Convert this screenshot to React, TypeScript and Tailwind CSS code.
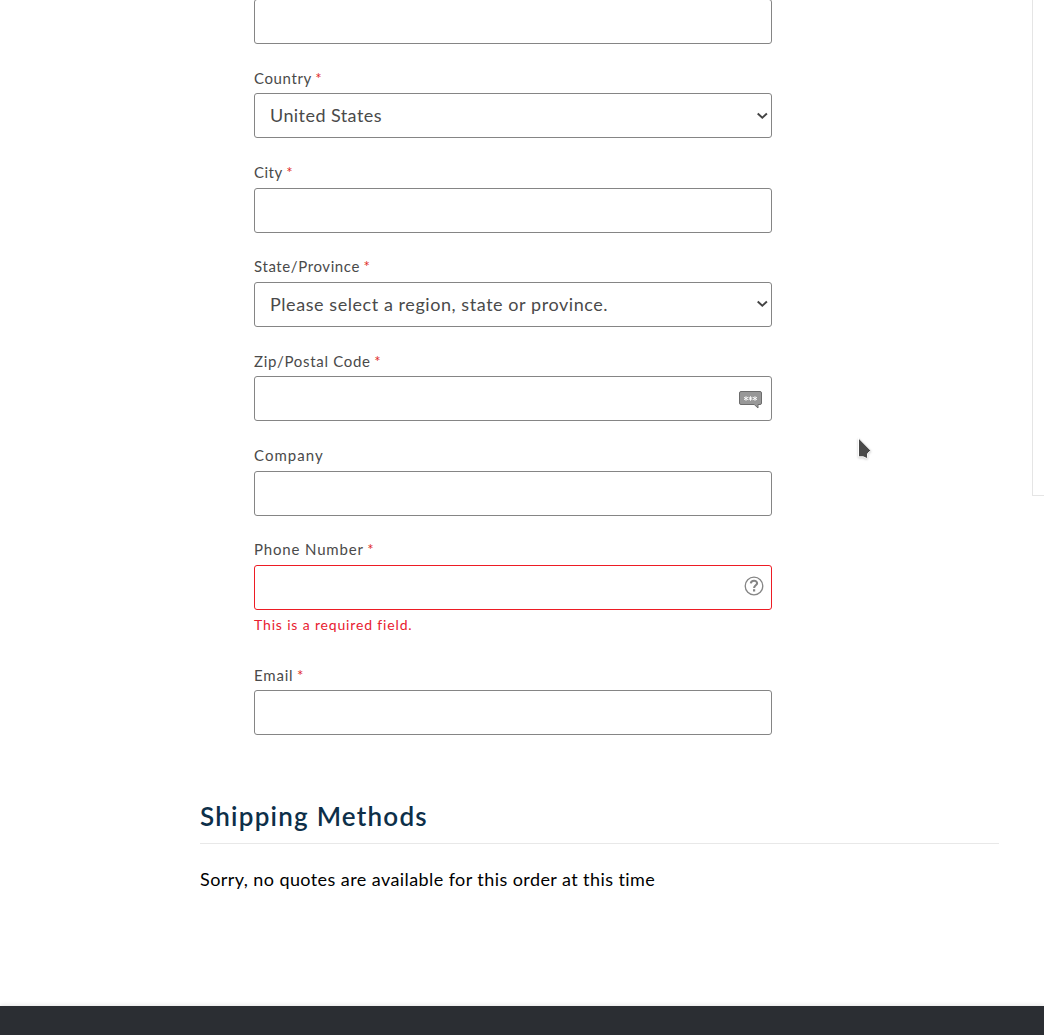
import type { ReactNode } from "react";

type FieldProps = {
  label: string;
  labelClass: string;
  required?: boolean;
  invalid?: boolean;
  children?: ReactNode;
};

function Field({ label, labelClass, required, invalid, children }: FieldProps) {
  return (
    <div>
      <div className="flex h-[49.33px] items-end pb-[5.5px] text-[15px] leading-5 text-[#4a4a4a]">
        <span className={labelClass}>{label}</span>
        {required && <span className="ml-[3.5px] text-[15px] text-[#e02b27]">*</span>}
      </div>
      <div
        className={`flex h-[45px] items-center justify-between rounded-[3px] border bg-white text-[18px] text-[#4a4a4a] ${
          invalid ? "border-[#ed1c24]" : "border-[#858585]"
        }`}
      >
        {children}
      </div>
    </div>
  );
}

function Chevron() {
  return (
    <svg className="mr-[3px]" width="12" height="8" viewBox="0 0 12 8" fill="none">
      <path d="M1.7 1.5 L6.3 5.8 L10.9 1.5" stroke="#444" strokeWidth="1.9" />
    </svg>
  );
}

function AutofillIcon() {
  return (
    <svg className="mt-[2px] mr-[9px]" width="23" height="18" viewBox="0 0 23 18">
      <path d="M2 .5H21Q22.5 .5 22.5 2V12Q22.5 13.5 21 13.5H19V17L15.2 13.5H2Q.5 13.5 .5 12V2Q.5 .5 2 .5Z" fill="#989898" stroke="#6c6c6c" />
      <path d="M7 5.2V9.8M5 6.3L9 8.7M9 6.3L5 8.7M11.5 5.2V9.8M9.5 6.3L13.5 8.7M13.5 6.3L9.5 8.7M16 5.2V9.8M14 6.3L18 8.7M18 6.3L14 8.7" stroke="#fff" strokeWidth=".9" />
    </svg>
  );
}

function HelpIcon() {
  return (
    <svg className="mr-[7.5px] mb-[3px]" width="20" height="20" viewBox="0 0 20 20" fill="none" stroke="#858585">
      <circle cx="10" cy="10" r="8.8" strokeWidth="1.3" />
      <path d="M6.8 7.4C7 5.6 8.3 4.8 10 4.8C11.9 4.8 13.1 5.8 13.1 7.2C13.1 9.3 10.1 9.3 10.1 12" strokeWidth="2.1" />
      <path d="M10.1 13.2V15.5" strokeWidth="2.2" />
    </svg>
  );
}

export default function App() {
  return (
    <div className="relative flex h-[1035px] flex-col overflow-hidden bg-white font-['Lato',sans-serif]">
      <main className="flex min-h-0 flex-1 justify-between">
        <div className="ml-[200px] w-[799px]">
          <form className="-mt-px ml-[54px] w-[518px]">
            <div className="h-[45px] rounded-[3px] border border-[#858585]" />
            <Field label="Country" labelClass="tracking-[0.6px]" required>
              <span className="pl-[15px] tracking-[0.43px]">United States</span>
              <Chevron />
            </Field>
            <Field label="City" labelClass="tracking-[0.5px]" required />
            <Field label="State/Province" labelClass="tracking-[0.6px]" required>
              <span className="pl-[15px] tracking-[0.56px]">Please select a region, state or province.</span>
              <Chevron />
            </Field>
            <Field label="Zip/Postal Code" labelClass="tracking-[0.7px]" required>
              <span />
              <AutofillIcon />
            </Field>
            <Field label="Company" labelClass="tracking-[1.03px]" />
            <Field label="Phone Number" labelClass="tracking-[0.84px]" required invalid>
              <span />
              <HelpIcon />
            </Field>
            <p className="-mb-[18px] h-[49px] pt-[5px] text-[14px] leading-5 tracking-[0.84px] text-[#e8202f]">
              This is a required field.
            </p>
            <Field label="Email" labelClass="tracking-[0.8px]" required />
          </form>
          <section className="mt-[61px]">
            <h2 className="h-[48px] border-b border-[#e8e8e8] pt-[3px] text-[26px] leading-[34px] font-semibold tracking-[1.24px] text-[#0d2f49]">
              Shipping Methods
            </h2>
            <p className="mt-[22px] text-[18px] leading-[26px] tracking-[0.42px] text-black">
              Sorry, no quotes are available for this order at this time
            </p>
          </section>
        </div>
        <aside className="h-[496px] w-[12px] border-b border-l border-[#e5e5e5]" />
      </main>
      <footer className="h-[29px] bg-[#2b2e33] shadow-[0_-1px_4px_rgba(0,0,0,0.1)]" />
      <svg
        className="absolute top-[434px] left-[854px] drop-shadow-[0_1px_1px_rgba(0,0,0,0.2)]"
        width="20"
        height="27"
        viewBox="0 0 20 27"
      >
        <path d="M4.5 4V22.8H9.3L12.4 24.3L13.6 23.6V19.5L16.8 16.5Z" fill="#4a4a4a" stroke="#fff" strokeWidth="1" />
      </svg>
    </div>
  );
}
